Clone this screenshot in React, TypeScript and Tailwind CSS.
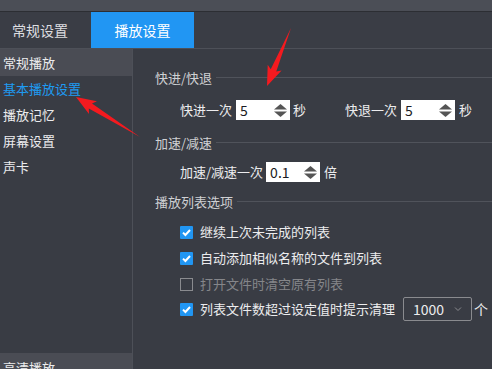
const font = { fontFamily: '"Noto Sans CJK SC", "Noto Sans", sans-serif' };

function Arrow({ x1, y1, x2, y2 }: { x1: number; y1: number; x2: number; y2: number }) {
  const dx = x2 - x1;
  const dy = y2 - y1;
  const len = Math.sqrt(dx * dx + dy * dy);
  const ang = (Math.atan2(dy, dx) * 180) / Math.PI;
  const pts = `0,0 ${len - 17},-3 ${len - 20},-7.5 ${len},0 ${len - 20},7.5 ${len - 17},3`;
  return (
    <polygon points={pts} fill="#f41a1f" transform={`translate(${x1} ${y1}) rotate(${ang})`} />
  );
}

function Spin({ value, w = 54 }: { value: string; w?: number }) {
  return (
    <div className="flex h-[20px] items-center justify-between bg-white pl-[4px] pr-[2px]" style={{ width: w }}>
      <span className="text-[14px] leading-none text-[#1b1b22]">{value}</span>
      <svg width="15" height="15" viewBox="0 0 15 15">
        <polygon points="7.5,1 14,6.5 1,6.5" fill="#555" />
        <polygon points="1,8.5 14,8.5 7.5,14" fill="#555" />
      </svg>
    </div>
  );
}

function Section({ title }: { title: string }) {
  return (
    <div className="flex h-[20px] items-center">
      <span className="text-[13px] text-[#cfd0d3]">{title}</span>
      <div className="ml-[4px] h-px flex-1 -translate-y-[1px] bg-[#50535b]" />
    </div>
  );
}

function Check({ on, disabled, label }: { on?: boolean; disabled?: boolean; label: string }) {
  return (
    <div className="flex items-center gap-[7px]">
      {on ? (
        <div className="flex h-[13px] w-[13px] items-center justify-center rounded-[1px] bg-[#2196f3]">
          <svg width="11" height="11" viewBox="0 0 11 11">
            <path d="M2 5.6 L4.4 8 L9 3" stroke="white" strokeWidth="2" fill="none" />
          </svg>
        </div>
      ) : (
        <div className="h-[13px] w-[13px] border border-[#8a8b8f]" />
      )}
      <span className={`text-[13px] ${disabled ? 'text-[#85868a]' : 'text-[#ececee]'}`}>{label}</span>
    </div>
  );
}

export default function App() {
  return (
    <div className="relative h-[369px] w-[492px] overflow-hidden bg-[#393c44]" style={font}>
      <div className="h-[11px] bg-[#4b4e56]" />
      <div className="h-px bg-[#2c2e33]" />
      <div className="flex h-[36px] bg-[#3a3d45]">
        <div className="flex w-[91px] items-center pl-[12px] text-[14px] text-[#dedfe1]">常规设置</div>
        <div className="flex w-[103px] items-center justify-center bg-[#2196f3] text-[14px] text-white">播放设置</div>
      </div>
      <div className="flex h-[321px] border-t border-[#4d5058]">
        <div className="flex w-[133px] flex-col border-r border-[#4d5058] text-[13px] text-[#ececee]">
          <div className="flex h-[27px] shrink-0 items-center bg-[#4a4c54] pl-[3px]">常规播放</div>
          <div className="flex h-[26px] shrink-0 items-center pl-[3px] text-[#1e9bf2]">基本播放设置</div>
          <div className="flex h-[26px] shrink-0 items-center pl-[3px]">播放记忆</div>
          <div className="flex h-[26px] shrink-0 items-center pl-[3px]">屏幕设置</div>
          <div className="flex h-[26px] shrink-0 items-center pl-[3px]">声卡</div>
          <div className="h-[173px] shrink-0" />
          <div className="flex h-[26px] shrink-0 items-start bg-[#4a4c54] pl-[3px] pt-[5px]">高清播放</div>
        </div>
        <div className="flex flex-1 flex-col pl-[22px] pt-[19px] text-[13px] text-[#ececee]">
          <Section title="快进/快退" />
          <div className="mt-[12px] flex h-[20px] items-center pl-[25px]">
            <span>快进一次</span>
            <div className="ml-[4px]"><Spin value="5" /></div>
            <span className="ml-[3px]">秒</span>
            <span className="ml-[39px]">快退一次</span>
            <div className="ml-[4px]"><Spin value="5" /></div>
            <span className="ml-[4px]">秒</span>
          </div>
          <div className="mt-[13px]"><Section title="加速/减速" /></div>
          <div className="mt-[9px] flex h-[20px] items-center pl-[25px]">
            <span>加速/减速一次</span>
            <div className="ml-[3px]"><Spin value="0.1" /></div>
            <span className="ml-[4px]">倍</span>
          </div>
          <div className="mt-[10px]"><Section title="播放列表选项" /></div>
          <div className="mt-[7px] flex flex-col pl-[25px]">
            <div className="flex h-[26px] items-center"><Check on label="继续上次未完成的列表" /></div>
            <div className="flex h-[26px] items-center"><Check on label="自动添加相似名称的文件到列表" /></div>
            <div className="flex h-[26px] items-center"><Check disabled label="打开文件时清空原有列表" /></div>
            <div className="flex h-[24px] items-center">
              <Check on label="列表文件数超过设定值时提示清理" />
              <div className="ml-[8px] flex h-[24px] w-[69px] items-center justify-between rounded-[2px] border border-[#8a8b8f] pl-[9px] pr-[9px]">
                <span className="text-[14px] text-[#ececee]">1000</span>
                <svg width="8" height="6" viewBox="0 0 8 6">
                  <path d="M1 1.5 L4 4.5 L7 1.5" stroke="#8a8b8f" strokeWidth="1" fill="none" />
                </svg>
              </div>
              <span className="ml-[2px] text-[14px]">个</span>
            </div>
          </div>
        </div>
      </div>
      <svg className="pointer-events-none absolute left-0 top-0" width="492" height="369">
        <Arrow x1={291} y1={28} x2={267} y2={86} />
        <Arrow x1={140} y1={137} x2={76} y2={97} />
      </svg>
    </div>
  );
}
